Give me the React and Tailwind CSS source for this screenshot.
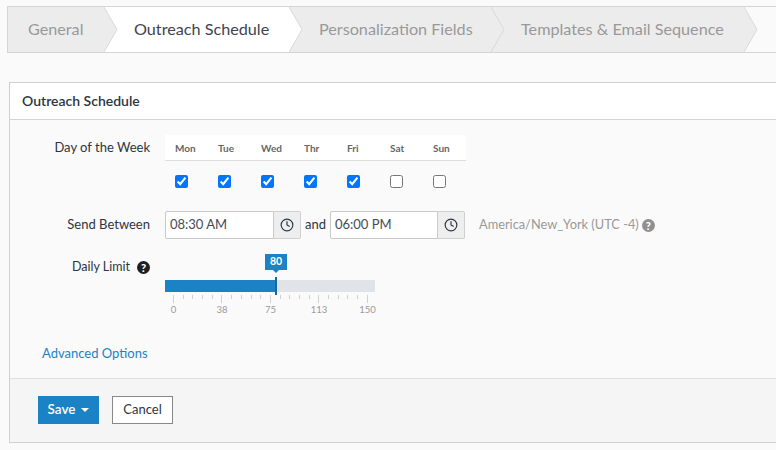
import React from 'react';
import { Clock } from 'lucide-react';

const tabs = [
  { label: 'General', width: 'w-[96px]', z: 'z-40', pad: 'pl-5' },
  { label: 'Outreach Schedule', width: 'w-[185px]', z: 'z-30', pad: 'pl-[30px]', active: true },
  { label: 'Personalization Fields', width: 'w-[202px]', z: 'z-20', pad: 'pl-[30px]' },
  { label: 'Templates & Email Sequence', width: 'w-[253px]', z: 'z-10', pad: 'pl-[30px]' },
];

const days = [
  ['Mon', true],
  ['Tue', true],
  ['Wed', true],
  ['Thr', true],
  ['Fri', true],
  ['Sat', false],
  ['Sun', false],
];

const HelpIcon = ({ className }) => (
  <span className={`inline-flex h-[13px] w-[13px] items-center justify-center rounded-full text-[11px] leading-none font-black text-white ${className}`}>
    ?
  </span>
);

const Tab = ({ label, width, z, pad, active }) => (
  <div className={`relative flex h-full shrink-0 items-center pb-px ${width} ${z} ${pad} ${active ? 'bg-white text-[#3d4450]' : 'bg-[#ececec] text-[#999999]'}`}>
    <span className="text-[16.2px] whitespace-nowrap">{label}</span>
    <svg className="absolute top-0 left-full h-[45px] w-[14px]" viewBox="0 0 14 45">
      <path d="M0 0 L13 22.5 L0 45 Z" fill={active ? '#ffffff' : '#ececec'} />
      <path d="M0 0 L13 22.5 L0 45" fill="none" stroke="#d9d9d9" />
    </svg>
  </div>
);

const TimeInput = ({ value, width }) => (
  <div className="flex h-[28px]">
    <div className={`flex items-center rounded-l-[2px] border border-[#c9c9c9] bg-white pb-px pl-1 text-[13px] text-[#444a55] ${width}`}>
      {value}
    </div>
    <div className="flex w-[27px] items-center justify-center rounded-r-[2px] border border-l-0 border-[#cfcfcf] bg-[#eeeeee]">
      <Clock size={14} strokeWidth={2} className="text-[#2c3540]" />
    </div>
  </div>
);

const Row = ({ label, className, children }) => (
  <div className={`flex ${className}`}>
    <div className="flex w-[140px] shrink-0 justify-end text-[13px] text-[#2c3540]">{label}</div>
    <div className="ml-[15px] min-w-0 flex-1">{children}</div>
  </div>
);

const App = () => {
  const ticks = Array.from({ length: 21 }, (_, i) => i);

  return (
    <div className="h-[450px] w-[776px] overflow-hidden bg-[#fafafa] pt-[6px] font-['Lato','Open_Sans',sans-serif]">
      <div className="ml-[7px] flex h-[47px] border border-r-0 border-[#d5d5d5]">
        {tabs.map((tab) => (
          <Tab key={tab.label} {...tab} />
        ))}
      </div>

      <div className="mt-[29px] ml-[9px] h-[361px] border-y border-l border-[#d0d0d0]">
        <div className="flex h-[37px] items-center border-b border-[#d5d5d5] bg-white pb-[2px] pl-3 text-[14px] font-semibold text-[#2c3540]">
          Outreach Schedule
        </div>

        <div className="h-[258px] pt-[15px]">
          <Row label={<span className="pt-[3px]">Day of the Week</span>} className="items-start">
            <div className="w-[301px]">
              <div className="flex h-[26px] items-center border-b border-[#dedede] bg-white pt-px">
                {days.map(([day]) => (
                  <div key={day} className="w-[43px] pl-[10px] text-[10px] font-bold text-[#666666]">
                    {day}
                  </div>
                ))}
              </div>
              <div className="flex h-[40px] items-center">
                {days.map(([day, checked]) => (
                  <div key={day} className="flex w-[43px] pl-[10px]">
                    <input type="checkbox" defaultChecked={checked} className="m-0 h-[13px] w-[13px]" />
                  </div>
                ))}
              </div>
            </div>
          </Row>

          <Row label={<span className="pt-[4px]">Send Between</span>} className="mt-[10px] items-start">
            <div className="flex items-center">
              <TimeInput value="08:30 AM" width="w-[109px]" />
              <span className="mr-[4px] ml-[4px] pb-px text-[13px] text-[#2c3540]">and</span>
              <TimeInput value="06:00 PM" width="w-[108px]" />
              <span className="ml-[14px] pb-px text-[12.8px] text-[#999999]">America/New_York (UTC -4)</span>
              <HelpIcon className="ml-[3px] bg-[#8f8f8f]" />
            </div>
          </Row>

          <Row
            label={
              <span className="flex items-center gap-[7px] pt-[19px] text-[12.5px]">
                Daily Limit <HelpIcon className="bg-[#1f1f1f]" />
              </span>
            }
            className="items-start"
          >
            <div className="w-[210px] pt-[15px]">
              <div className="relative h-[20px]">
                <div className="absolute left-[100px] flex h-[16px] w-[22px] items-center justify-center bg-[#1b82c5] text-[10.5px] font-bold text-white">
                  80
                </div>
                <div className="absolute top-[16px] left-[108px] h-0 w-0 border-x-[3px] border-t-[3px] border-x-transparent border-t-[#1b82c5]" />
              </div>
              <div className="relative mt-[6px] h-[12px] bg-[#e0e3e7]">
                <div className="h-full w-[111px] bg-[#1b82c5]" />
                <div className="absolute top-[-3px] left-[110px] h-[18px] w-[2px] bg-[#15699f]" />
              </div>
              <div className="mt-[3px] ml-[8px] flex w-[195px] items-start justify-between">
                {ticks.map((t) => (
                  <div key={t} className={`w-px bg-[#d0d0d0] ${t % 5 === 0 ? 'h-[8px]' : 'h-[4px]'}`} />
                ))}
              </div>
              <div className="ml-[8px] flex h-[14px] w-[195px] items-center justify-between text-[9.5px] text-[#999999]">
                {['0', '38', '75', '113', '150'].map((n) => (
                  <div key={n} className="flex w-px justify-center">
                    {n}
                  </div>
                ))}
              </div>
            </div>
          </Row>

          <div className="mt-[27px] ml-[32px] text-[13px] text-[#1b82c5]">Advanced Options</div>
        </div>

        <div className="flex h-[64px] items-start gap-[13px] border-t border-[#e0e0e0] bg-[#f5f5f5] pt-[17px] pl-[28px]">
          <button className="flex h-[28px] w-[61px] items-center justify-center gap-[6px] bg-[#1b82c5] pb-px text-[13.5px] font-semibold text-white">
            Save
            <span className="h-0 w-0 border-x-[4px] border-t-[4px] border-x-transparent border-t-white" />
          </button>
          <button className="h-[28px] w-[61px] border border-[#888888] bg-white pb-px text-[13px] text-[#2c3540]">
            Cancel
          </button>
        </div>
      </div>
    </div>
  );
};

export default App;
